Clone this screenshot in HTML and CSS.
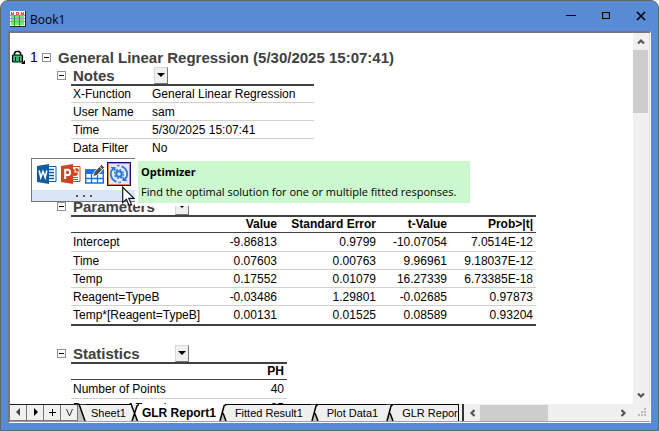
FILE: index.html
```html
<!DOCTYPE html>
<html lang="en">
  <head>
    <meta charset="UTF-8" />
    <meta name="viewport" content="width=device-width, initial-scale=1.0" />
    <title>Book1</title>
    <link rel="stylesheet" href="styles.css">
  </head>
  <body>
    <div class="window">
      <header class="titlebar">
        <svg class="book-icon" width="16" height="16" viewBox="0 0 16 16" shape-rendering="crispEdges">
          <rect width="16" height="16" fill="#222" />
          <rect width="15" height="15" fill="#fff" />
          <path d="M1 1h3v3H1zM6 1h3v3H6zM11 1h3v3h-3z" fill="#ff5050" />
          <path d="M2 1h1v1H2zM7 2h1v1H7zM12 1h1v1h-1z" fill="#fff" />
          <path d="M1 5h3v2H1zM5 5h4v2H5zM10 5h4v2h-4zM1 8h3v2H1zM5 8h4v2H5zM10 8h4v2h-4zM1 11h3v3H1zM5 11h4v3H5zM10 11h4v3h-4z" fill="#6be86b" />
          <path d="M0 4h15v1H0zM0 7h15v1H0zM0 10h15v1H0z" fill="#b98ad8" />
          <path d="M4 4h1v11H4zM9 4h1v11H9z" fill="#2a9a3a" />
        </svg>
        <span class="book-name">Book1</span>
        <button class="win-btn" aria-label="Minimize">
          <svg width="10" height="10" viewBox="0 0 10 10"><path d="M0 4.500h10" stroke="#000" /></svg>
        </button>
        <button class="win-btn" aria-label="Maximize">
          <svg width="8" height="8" viewBox="0 0 8 8"><path d="M.5 .5h7v6h-7z" fill="none" stroke="#000" stroke-width="1.200" /></svg>
        </button>
        <button class="win-btn" aria-label="Close">
          <svg width="10" height="10" viewBox="0 0 10 10"><path d="M1 1l8 8M9 1L1 9" stroke="#000" stroke-width="1.600" /></svg>
        </button>
      </header>

      <div class="client">
        <div class="view">
          <main class="sheet">
            <div class="root-row">
              <svg class="lock" width="15" height="14" viewBox="0 0 15 14">
                <path d="M3.500 5V3l1.500-1.500h3L9.500 3v2" fill="none" stroke="#000" stroke-width="1.600" />
                <path d="M2 5h9l.5 1v5l-.5 1H2l-.5-1V6z" fill="#3cb371" stroke="#000" stroke-width="1.200" />
                <path d="M4.500 7v4M8.500 7v4" stroke="#000" />
                <path d="M14 10v4h-4z" fill="#000" />
              </svg>
              <span class="row-no">1</span>
              <button class="toggle" aria-label="Collapse report"></button>
              <h1>General Linear Regression (5/30/2025 15:07:41)</h1>
            </div>

            <section class="block">
              <div class="block-head">
                <button class="toggle" aria-label="Collapse Notes"></button>
                <h2 class="short">Notes</h2>
                <button class="drop" aria-label="Notes menu"></button>
              </div>
              <table class="notes">
                <tbody>
                  <tr><th scope="row">X-Function</th><td>General Linear Regression</td></tr>
                  <tr><th scope="row">User Name</th><td>sam</td></tr>
                  <tr><th scope="row">Time</th><td>5/30/2025 15:07:41</td></tr>
                  <tr><th scope="row">Data Filter</th><td>No</td></tr>
                </tbody>
              </table>
            </section>

            <section class="block params-block">
              <div class="block-head">
                <button class="toggle" aria-label="Collapse Parameters"></button>
                <h2>Parameters</h2>
                <button class="drop" aria-label="Parameters menu"></button>
              </div>
              <table class="grid params">
                <colgroup>
                  <col class="c-name"><col class="c-value"><col class="c-error"><col class="c-t"><col class="c-prob">
                </colgroup>
                <thead>
                  <tr><td></td><th>Value</th><th>Standard Error</th><th>t-Value</th><th>Prob&gt;|t|</th></tr>
                </thead>
                <tbody>
                  <tr><th scope="row">Intercept</th><td>-9.86813</td><td>0.9799</td><td>-10.07054</td><td>7.0514E-12</td></tr>
                  <tr><th scope="row">Time</th><td>0.07603</td><td>0.00763</td><td>9.96961</td><td>9.18037E-12</td></tr>
                  <tr><th scope="row">Temp</th><td>0.17552</td><td>0.01079</td><td>16.27339</td><td>6.73385E-18</td></tr>
                  <tr><th scope="row">Reagent=TypeB</th><td>-0.03486</td><td>1.29801</td><td>-0.02685</td><td>0.97873</td></tr>
                  <tr><th scope="row">Temp*[Reagent=TypeB]</th><td>0.00131</td><td>0.01525</td><td>0.08589</td><td>0.93204</td></tr>
                </tbody>
              </table>
            </section>

            <section class="block stats-block">
              <div class="block-head">
                <button class="toggle" aria-label="Collapse Statistics"></button>
                <h2>Statistics</h2>
                <button class="drop" aria-label="Statistics menu"></button>
              </div>
              <table class="grid stats">
                <thead>
                  <tr><td></td><th>PH</th></tr>
                </thead>
                <tbody>
                  <tr><th scope="row">Number of Points</th><td>40</td></tr>
                  <tr><th scope="row">Degrees of Freedom</th><td>35</td></tr>
                </tbody>
              </table>
            </section>
          </main>

          <div class="vscroll">
            <button class="arrow" aria-label="Scroll up">
              <svg width="8" height="7" viewBox="0 0 8 7"><path d="M1 5.500l3-3 3 3" fill="none" stroke="#555" stroke-width="2.200" /></svg>
            </button>
            <div class="vthumb"></div>
            <button class="arrow arrow-end" aria-label="Scroll down">
              <svg width="8" height="7" viewBox="0 0 8 7"><path d="M1 1.500l3 3 3-3" fill="none" stroke="#555" stroke-width="2.200" /></svg>
            </button>
          </div>
        </div>

        <footer class="bottom">
          <div class="nav">
            <button aria-label="Previous sheet"><svg width="9" height="9" viewBox="0 0 9 9"><path d="M6 0v8L2 4z" fill="#444" /></svg></button>
            <button aria-label="Next sheet"><svg width="9" height="9" viewBox="0 0 9 9"><path d="M3 0v8l4-4z" fill="#000" /></svg></button>
            <button aria-label="Add sheet"><svg width="9" height="9" viewBox="0 0 9 9"><path d="M1 4.500h7M4.500 1v7" stroke="#000" /></svg></button>
            <button aria-label="Sheet list"><svg width="9" height="9" viewBox="0 0 9 9"><path d="M1.500 1l3 7 3-7" fill="none" stroke="#333" /></svg></button>
          </div>
          <nav class="tabs">
            <svg class="edge" width="8" height="17" viewBox="0 0 8 17"><path d="M0 0l7 17H0z" fill="#c4c4c4" /><path d="M0 0h8M1 0l6 17" fill="none" stroke="#000" stroke-width="1.500" /></svg>
            <button class="tab">Sheet1</button>
            <svg class="edge" width="8" height="17" viewBox="0 0 8 17"><path d="M1 17L6 2l2-2v17z" fill="#fff" /><path d="M3.500 10L6 17H1z" fill="#c4c4c4" /><path d="M1 17L6 2l2-1.500M0 0l6.500 17" fill="none" stroke="#000" stroke-width="1.500" /></svg>
            <button class="tab active">GLR Report1</button>
            <svg class="edge" width="8" height="17" viewBox="0 0 8 17"><path d="M0 0h5L0 17z" fill="#fff" /><path d="M4 9l3 8H1z" fill="#c4c4c4" /><path d="M1 17L5 2l2-1.500h1M4 9l3 8" fill="none" stroke="#000" stroke-width="1.500" /></svg>
            <button class="tab wide">Fitted Result1</button>
            <svg class="edge" width="8" height="17" viewBox="0 0 8 17"><path d="M4 9l3 8H1z" fill="#c4c4c4" /><path d="M0 0h8M1 17L5 2l2-1.500M4 9l3 8" fill="none" stroke="#000" stroke-width="1.500" /></svg>
            <button class="tab wide">Plot Data1</button>
            <svg class="edge" width="8" height="17" viewBox="0 0 8 17"><path d="M4 9l3 8H1z" fill="#c4c4c4" /><path d="M0 0h8M1 17L5 2l2-1.500M4 9l3 8" fill="none" stroke="#000" stroke-width="1.500" /></svg>
            <button class="tab wide">GLR Report2</button>
          </nav>
          <div class="hscroll">
            <button class="arrow" aria-label="Scroll left">
              <svg width="7" height="8" viewBox="0 0 7 8"><path d="M5.500 1l-3 3 3 3" fill="none" stroke="#555" stroke-width="2.200" /></svg>
            </button>
            <div class="hthumb"></div>
            <button class="arrow arrow-end" aria-label="Scroll right">
              <svg width="7" height="8" viewBox="0 0 7 8"><path d="M1.500 1l3 3-3 3" fill="none" stroke="#555" stroke-width="2.200" /></svg>
            </button>
            <svg class="grip" width="9" height="9" viewBox="0 0 9 9"><path d="M6 0h2v2H6zM3 3h2v2H3zM6 3h2v2H6zM0 6h2v2H0zM3 6h2v2H3zM6 6h2v2H6z" fill="#b8b8b8" /></svg>
          </div>
        </footer>
      </div>

      <div class="mini-toolbar">
        <div class="tools">
          <button aria-label="Send to Word">
            <svg width="20" height="20" viewBox="0 0 20 20">
              <path d="M10 2.500h9v15h-9z" fill="#fff" stroke="#0f5c9c" />
              <path d="M12 5.500h5M12 8.500h5M12 11.500h5M12 14.500h5" stroke="#0f5c9c" stroke-width="1.300" />
              <path d="M0 2l12-2v20L0 18z" fill="#0f5c9c" />
              <path d="M2.200 6.500l1.600 7L6 7.500l2.200 6 1.600-7" fill="none" stroke="#fff" stroke-width="1.600" />
            </svg>
          </button>
          <button aria-label="Send to PowerPoint">
            <svg width="20" height="20" viewBox="0 0 20 20">
              <path d="M10 2.500h9v15h-9z" fill="#fff" stroke="#d04423" />
              <path d="M12 13.500h5M12 15.500h5" stroke="#d04423" />
              <path d="M13.500 5a3.500 3.500 0 1 0 3.500 3.500h-3.500z" fill="#d04423" />
              <path d="M14.500 4v3.500H18A3.500 3.500 0 0 0 14.500 4z" fill="#d04423" />
              <path d="M0 2l12-2v20L0 18z" fill="#d04423" />
              <path d="M4.200 15V5.800h2.500a2.400 2.600 0 0 1 0 5.200H4.200" fill="none" stroke="#fff" stroke-width="2" />
            </svg>
          </button>
          <button aria-label="Edit table">
            <svg width="20" height="20" viewBox="0 0 20 20">
              <path d="M.7 6h17.600v13H.7z" fill="#fff" stroke="#1b6fe0" stroke-width="1.400" />
              <path d="M0 5.500h12l-3 4.500H0zM14 10l3-3h2v3z" fill="#1b6fe0" />
              <path d="M1 14.500h17M6.500 9v10M12.500 11v8" stroke="#1b6fe0" stroke-width="1.300" />
              <path d="M8 12.500l1.200-4.500L16.500 .5l3 3-7.500 8z" fill="#505050" stroke="#fff" stroke-width=".8" />
              <path d="M14.300 2.500l3.200 3.200" stroke="#fff" />
            </svg>
          </button>
          <button class="picked" aria-label="Optimizer">
            <svg width="20" height="20" viewBox="0 0 20 20">
              <g fill="none" stroke="#2f77d0">
                <path d="M3.800 4.800A8 8 0 0 0 7.500 17.700M16.200 15.200A8 8 0 0 0 12.500 2.300" stroke-width="1.800" />
                <path d="M8 1.800a8.500 8.500 0 0 1 2.500-.3M12 18.200a8.500 8.500 0 0 1-2.500.3" stroke-width="1.300" />
                <circle cx="10" cy="10" r="2.700" stroke-width="2" />
                <circle cx="10" cy="10" r="4.300" stroke-width="1.600" stroke-dasharray="1.700 1.680" />
              </g>
              <path d="M1.500 3h5v5zM18.500 17h-5v-5z" fill="#2f77d0" />
            </svg>
          </button>
        </div>
        <button class="more" aria-label="More tools"><i></i><i></i><i></i></button>
      </div>

      <div class="tooltip" role="tooltip">
        <strong>Optimizer</strong>
        <span>Find the optimal solution for one or multiple fitted responses.</span>
      </div>

      <svg class="cursor" width="14" height="21" viewBox="0 0 14 21">
        <path d="M.7 1.200v15.500l3.700-3.500 2.600 6 2.400-1-2.600-5.900h5.200z" fill="#fff" stroke="#111827" stroke-width="1.200" />
      </svg>
    </div>
  </body>
</html>
```
FILE: styles.css
```css
* {
  box-sizing: border-box;
}

body {
  margin: 0;
  background-color: #fff;
  font-family: "Liberation Sans", Arial, sans-serif;
  font-size: 12px;
  color: #000;
}

button {
  padding: 0;
  border: none;
  background: none;
  font: inherit;
  color: inherit;
}

svg {
  display: block;
  flex: none;
}

.window {
  position: relative;
  display: flex;
  flex-direction: column;
  height: 100vh;
  padding: 0 7px 7px;
  border: 1px solid #666;
  border-radius: 8px 8px 0 0;
  background-color: #588bd4;
}

/* title bar */
.titlebar {
  display: flex;
  align-items: center;
  height: 30px;
  margin-right: -7px;
  padding-left: 2px;
}

.book-icon {
  margin-top: 6px;
}

.book-name {
  flex: 1;
  margin: 6px 0 0 4px;
  font-family: "Open Sans", "Noto Sans", sans-serif;
}

.win-btn {
  display: flex;
  align-items: center;
  justify-content: center;
  width: 35px;
  height: 28px;
}

/* client area */
.client {
  flex: 1;
  display: flex;
  flex-direction: column;
  min-height: 0;
  border: 1px solid #fff;
  border-top: 2px solid #777;
  border-left: 2px solid #777;
  background-color: #f0f0f0;
}

.view {
  flex: 1;
  display: flex;
  min-height: 0;
}

.sheet {
  flex: 1;
  min-width: 0;
  overflow: hidden;
  padding-top: 15px;
  background-color: #fff;
}

.root-row,
.block-head {
  display: flex;
  align-items: center;
}

.root-row {
  height: 18px;
  padding-left: 1px;
}

.row-no {
  width: 12px;
  margin-left: 4px;
  font-size: 14px;
}

h1,
h2 {
  margin: 0;
  font-size: 15px;
  color: #404040;
  white-space: nowrap;
}

h1 {
  margin-left: 7px;
}

h2 {
  width: 102px;
  margin-left: 7px;
}

h2.short {
  width: 81px;
}

.block-head {
  height: 18px;
  padding-left: 47px;
}

.toggle {
  display: flex;
  align-items: center;
  justify-content: center;
  width: 9px;
  height: 9px;
  border: 1px solid #909090;
}

.toggle::before {
  content: "";
  width: 5px;
  height: 1px;
  background-color: #000;
}

.drop {
  display: flex;
  align-items: center;
  justify-content: center;
  width: 14px;
  height: 17px;
  border: 1px solid #d8d8d8;
  border-right-color: #777;
  border-bottom-color: #777;
  background-color: #f0f0f0;
}

.drop::before {
  content: "";
  border: 4px solid transparent;
  border-top-color: #000;
  border-bottom-width: 0;
}

.params-block {
  margin-top: 40px;
}

.stats-block {
  margin-top: 18px;
}

/* report tables */
table {
  margin-left: 61px;
  border-top: 2px solid #404040;
  border-spacing: 0;
  table-layout: fixed;
}

th,
td {
  height: 18px;
  padding: 0 3px 0 2px;
  border-bottom: 1px solid #d0d0d0;
  line-height: 16px;
  white-space: nowrap;
}

tbody th {
  font-weight: normal;
  text-align: left;
}

.notes {
  width: 243px;
}

.notes th {
  width: 79px;
}

.notes tr:first-child > * {
  height: 17px;
}

.notes tr:last-child > * {
  border-bottom: none;
}

.grid td,
.grid thead th {
  text-align: right;
}

.grid thead > tr > * {
  height: 16px;
  border-bottom-color: #404040;
  line-height: 15px;
}

.grid tbody tr:first-child > * {
  height: 19px;
}

.params {
  width: 465px;
  border-bottom: 2px solid #404040;
}

.params tbody tr:last-child > * {
  border-bottom: none;
}

.c-name {
  width: 140px;
}

.c-value {
  width: 69px;
}

.c-error {
  width: 99px;
}

.c-t {
  width: 71px;
}

.c-prob {
  width: 86px;
}

.stats {
  width: 216px;
}

.stats thead td {
  width: 140px;
}

/* scrollbars */
.vscroll {
  display: flex;
  flex-direction: column;
  width: 17px;
  border-right: 1px solid #e0e0e0;
}

.arrow {
  display: flex;
  flex: none;
  align-items: center;
  justify-content: center;
  width: 16px;
  height: 17px;
}

.arrow-end {
  margin-top: auto;
}

.vthumb {
  width: 15px;
  height: 63px;
  background-color: #cdcdcd;
}

.bottom {
  display: flex;
  height: 18px;
  border-bottom: 1px solid #a0a0a0;
}

.nav {
  display: flex;
  border-top: 1px solid #222;
}

.nav button {
  display: flex;
  align-items: center;
  justify-content: center;
  width: 17px;
  border-right: 1px solid #777;
  border-bottom: 1px solid #777;
}

.tabs {
  display: flex;
  width: 381px;
  overflow: hidden;
  border-right: 1px solid #000;
}

.tab {
  flex: none;
  padding: 0 5px;
  border-top: 1px solid #000;
  font-size: 11px;
  white-space: nowrap;
}

.tab.wide {
  padding: 0 8px;
}

.tab.active {
  padding: 0 3px;
  border-top-color: #fff;
  background-color: #fff;
  font-size: 12px;
  font-weight: bold;
}

.hscroll {
  flex: 1;
  display: flex;
  align-items: center;
  margin-left: 3px;
  padding-right: 3px;
  border-left: 2px solid #333;
}

.hthumb {
  width: 68px;
  height: 16px;
  background-color: #cdcdcd;
}

.hscroll .arrow-end {
  margin: 0 7px 0 auto;
}

/* floating toolbar and its tooltip */
.mini-toolbar {
  position: absolute;
  left: 30px;
  top: 157px;
  width: 105px;
  border: 1px solid #777;
  background-color: #fff;
}

.tools {
  display: flex;
  padding: 3px 3px 4px;
}

.tools button {
  display: flex;
  align-items: center;
  justify-content: center;
  width: 24px;
  height: 24px;
}

.tools .picked {
  border: 1px solid #10107a;
  background-color: #dfe9f8;
  box-shadow: inset 0 0 0 1px #f08050;
}

.more {
  display: flex;
  align-items: center;
  justify-content: center;
  gap: 5px;
  width: 100%;
  height: 11px;
  background-color: #dae5f6;
}

.more i {
  width: 2px;
  height: 2px;
  background-color: #555;
}

.tooltip {
  position: absolute;
  left: 137px;
  top: 160px;
  display: flex;
  flex-direction: column;
  min-width: 332px;
  padding: 1px 3px;
  background-color: #ccf8cf;
  box-shadow: 0 0 0 3px #fff;
  font-family: "Open Sans", "Noto Sans", sans-serif;
  font-size: 11px;
  line-height: 20px;
  white-space: nowrap;
}

.cursor {
  position: absolute;
  left: 121px;
  top: 185px;
}
```
